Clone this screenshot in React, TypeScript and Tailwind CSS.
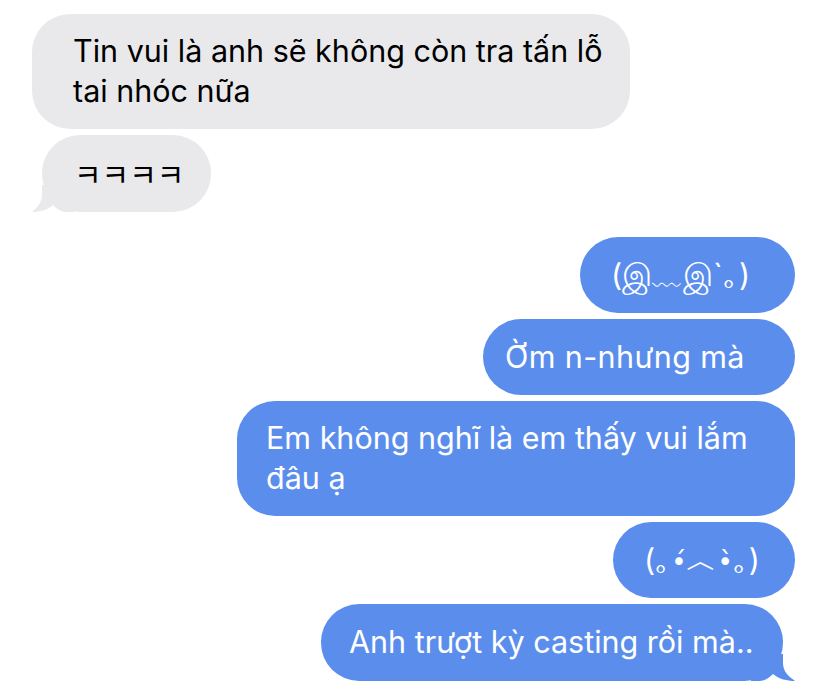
import React from "react";

const GRAY = "bg-[#e9e9eb]";
const BLUE = "bg-[#5b8eec]";

function LeftTail() {
  return (
    <svg
      className="absolute left-[-10px] bottom-0"
      width="42"
      height="27"
      viewBox="0 0 42 27"
    >
      <path
        d="M10,0 L10,9 C10,17 6,22 0,27 C8,27 15,25 21,20 C25,24 29,27 35,27 L42,27 L42,0 Z"
        fill="#e9e9eb"
      />
    </svg>
  );
}

function RightTail() {
  return (
    <svg
      className="absolute right-[-12px] bottom-0 -scale-x-100"
      width="44"
      height="27"
      viewBox="0 0 44 27"
    >
      <path
        d="M12,0 L12,9 C12,17 7,22 0,27 C8,27 16,25 22,20 C26,24 30,27 36,27 L44,27 L44,0 Z"
        fill="#5b8eec"
      />
    </svg>
  );
}

export default function App() {
  return (
    <div className="w-[828px] h-[696px] bg-white overflow-hidden font-['Inter','Noto_Sans',sans-serif] text-[30.5px] leading-[40px]">
      <div className="flex flex-col pt-[14px]">
        <div className="flex flex-col items-start gap-[6px] pl-[32px]">
          <div className={`${GRAY} w-[598px] h-[115px] rounded-[38px] pl-[41px] pt-[17px] text-black whitespace-nowrap`}>
            Tin vui là anh sẽ không còn tra tấn lỗ
            <br />
            tai nhóc nữa
          </div>
          <div className="relative ml-[10px]">
            <div className={`${GRAY} w-[169px] h-[77px] rounded-[38px] pl-[32px] pt-[18px] text-black whitespace-nowrap font-['Noto_Sans_CJK_KR',sans-serif] text-[30px]`}>
              ㅋㅋㅋㅋ
            </div>
            <LeftTail />
          </div>
        </div>

        <div className="flex flex-col items-end gap-[6px] pr-[33px] mt-[25px] text-white">
          <div className={`${BLUE} w-[215px] h-[76px] rounded-[38px] pl-[31px] pt-[18px] whitespace-nowrap`}>
            (இ﹏இ`｡)
          </div>
          <div className={`${BLUE} w-[312px] h-[76px] rounded-[38px] pl-[22px] pt-[18px] whitespace-nowrap tracking-[0.4px]`}>
            Ờm n-nhưng mà
          </div>
          <div className={`${BLUE} w-[558px] h-[115px] rounded-[38px] pl-[29px] pt-[17px] whitespace-nowrap`}>
            Em không nghĩ là em thấy vui lắm
            <br />
            đâu ạ
          </div>
          <div className={`${BLUE} w-[182px] h-[76px] rounded-[38px] pl-[31px] pt-[18px] whitespace-nowrap`}>
            (｡<span className="font-['DejaVu_Sans',sans-serif] text-[26px]">•́</span>︿<span className="font-['DejaVu_Sans',sans-serif] text-[26px]">•̀</span>｡)
          </div>
          <div className="relative mr-[12px]">
            <div className={`${BLUE} w-[462px] h-[77px] rounded-[38px] pl-[28px] pt-[18px] whitespace-nowrap`}>
              Anh trượt kỳ casting rồi mà..
            </div>
            <RightTail />
          </div>
        </div>
      </div>
    </div>
  );
}
